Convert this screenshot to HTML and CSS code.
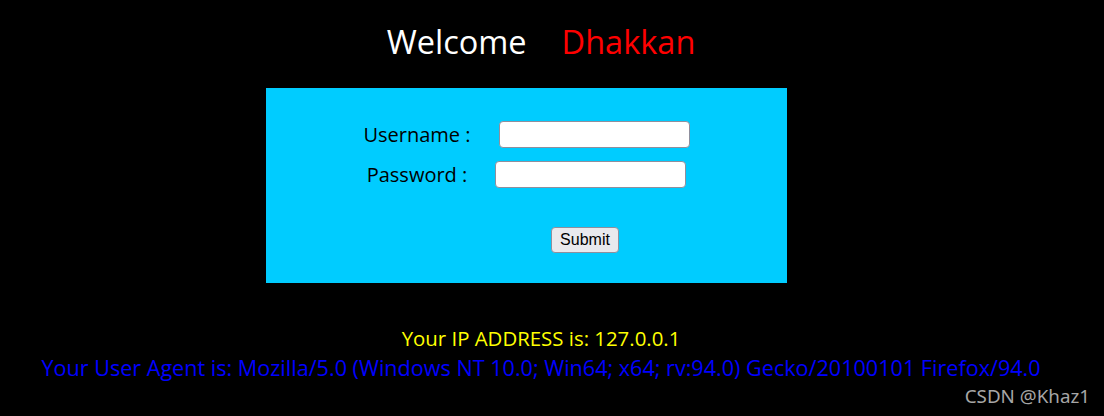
FILE: index.html
```html
<!DOCTYPE html>
<html lang="en">
<head>
  <meta charset="UTF-8">
  <title>Less-18 Header Injection</title>
  <link rel="stylesheet" href="styles.css">
</head>
<body>
  <div class="page">
    <div class="title">Welcome<span class="name">Dhakkan</span></div>

    <div class="panel">
      <form class="login" method="post" action="">
        <div class="row">
          <label for="uname">Username :</label>
          <input type="text" id="uname" name="uname" class="field">
        </div>
        <div class="row">
          <label for="passwd">Password :</label>
          <input type="password" id="passwd" name="passwd" class="field">
        </div>
        <div class="submit-row">
          <input type="submit" name="submit" value="Submit" class="btn">
        </div>
      </form>
    </div>

    <div class="info">
      <div class="ip">Your IP ADDRESS is: 127.0.0.1</div>
      <div class="agent">Your User Agent is: Mozilla/5.0 (Windows NT 10.0; Win64; x64; rv:94.0) Gecko/20100101 Firefox/94.0</div>
    </div>
  </div>

  <div class="watermark">CSDN @Khaz1</div>
</body>
</html>
```

FILE: styles.css
```css
body {
  margin: 0;
  padding: 0 8px;
  background: #000;
  font-family: 'Open Sans', 'Noto Sans', sans-serif;
  min-height: 416px;
  overflow: hidden;
}

.page {
  width: 1066px;
}

.title {
  padding-top: 20px;
  color: #fff;
  font-size: 32.5px;
  line-height: 44px;
  text-align: center;
}

.name {
  color: #ff0000;
  margin-left: 35px;
}

.panel {
  margin: 24px 0 0 258px;
  width: 521px;
  height: 195px;
  background-color: #00ccff;
  box-sizing: border-box;
  padding-top: 33px;
}

.login {
  display: flex;
  flex-direction: column;
  gap: 13px;
}

.row {
  display: flex;
  justify-content: center;
  align-items: center;
  gap: 28px;
  height: 27px;
}

.row label {
  font-size: 20px;
  color: #000;
}

.field {
  width: 191px;
  height: 27px;
  box-sizing: border-box;
  border: 1px solid #8f8f9d;
  border-radius: 4px;
  background: #fff;
  margin: 0;
  padding: 0 4px;
}

.submit-row {
  margin-top: 26px;
  display: flex;
  padding-left: 285px;
}

.btn {
  font-family: 'Liberation Sans', Arial, sans-serif;
  font-size: 16px;
  width: 68px;
  height: 26px;
  padding: 0;
  background: #e9e9ed;
  border: 1px solid #8f8f9d;
  border-radius: 4px;
  color: #000;
}

.info {
  margin-top: 41px;
  text-align: center;
}

.ip {
  color: #ffff00;
  font-size: 20.4px;
  line-height: 29px;
}

.agent {
  color: #0000ff;
  font-size: 21.6px;
  line-height: 29px;
}

.watermark {
  position: absolute;
  right: 14px;
  bottom: 7px;
  color: #a6a6a6;
  font-family: 'Noto Sans', sans-serif;
  font-size: 18.8px;
}
```
